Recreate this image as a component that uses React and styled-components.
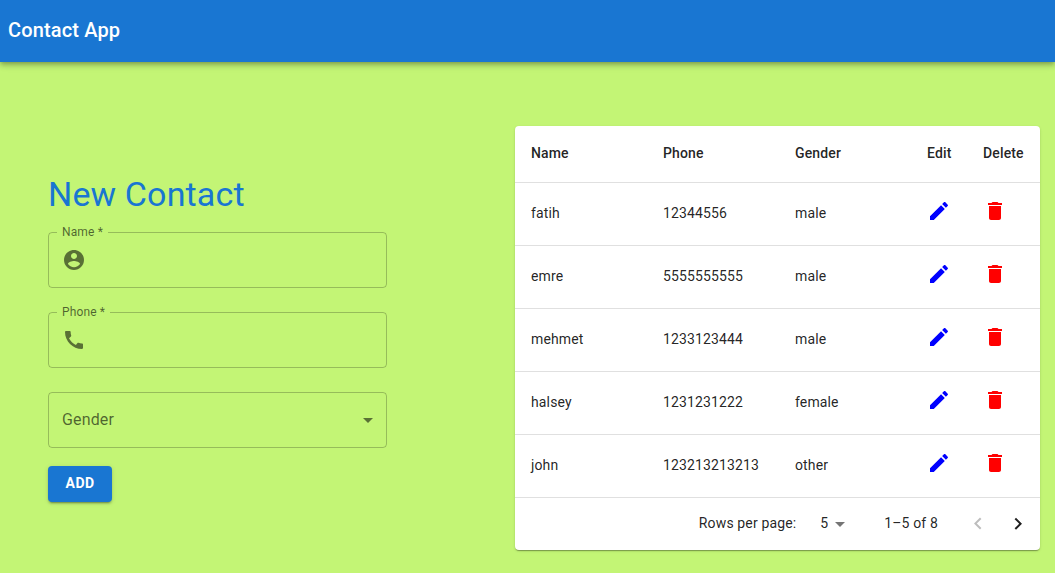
import React, { useState } from "react";
import styled, { createGlobalStyle } from "styled-components";

const GlobalStyle = createGlobalStyle`
  *, *::before, *::after { box-sizing: border-box; }
  body {
    margin: 0;
    background: #c3f575;
    color: rgba(0, 0, 0, 0.87);
    font-family: Roboto, "Liberation Sans", sans-serif;
    font-size: 14px;
    letter-spacing: 0.01em;
  }
  button, input, select { font: inherit; letter-spacing: inherit; color: inherit; }
`;

const paths = {
  account:
    "M12 2C6.48 2 2 6.48 2 12s4.48 10 10 10 10-4.48 10-10S17.52 2 12 2zm0 3c1.66 0 3 1.34 3 3s-1.34 3-3 3-3-1.34-3-3 1.34-3 3-3zm0 14.2c-2.5 0-4.71-1.28-6-3.22.03-1.99 4-3.08 6-3.08 1.99 0 5.97 1.09 6 3.08-1.29 1.94-3.5 3.22-6 3.22z",
  phone:
    "M20.01 15.38c-1.23 0-2.42-.2-3.53-.56-.35-.12-.74-.03-1.01.24l-1.57 1.97c-2.83-1.35-5.48-3.9-6.89-6.83l1.95-1.66c.27-.28.35-.67.24-1.02-.37-1.11-.56-2.3-.56-3.53 0-.54-.45-.99-.99-.99H4.19C3.65 3 3 3.24 3 3.99 3 13.28 10.73 21 20.01 21c.71 0 .99-.63.99-1.18v-3.45c0-.54-.45-.99-.99-.99z",
  dropDown: "M7 10l5 5 5-5z",
  edit:
    "M3 17.25V21h3.75L17.81 9.94l-3.75-3.75L3 17.25zM20.71 7.04c.39-.39.39-1.02 0-1.41l-2.34-2.34c-.39-.39-1.02-.39-1.41 0l-1.83 1.83 3.75 3.75 1.83-1.83z",
  remove:
    "M6 19c0 1.1.9 2 2 2h8c1.1 0 2-.9 2-2V7H6v12zM19 4h-3.5l-1-1h-5l-1 1H5v2h14V4z",
  previous: "M15.41 16.09l-4.58-4.59 4.58-4.59L14 5.5l-6 6 6 6z",
  next: "M8.59 16.34l4.58-4.59-4.58-4.59L10 5.75l6 6-6 6z",
};

const Svg = styled.svg`
  display: block;
  flex: none;
  width: 24px;
  height: 24px;
  fill: currentColor;
`;

const Icon = ({ name }) => (
  <Svg viewBox="0 0 24 24" aria-hidden="true">
    <path d={paths[name]} />
  </Svg>
);

const AppBar = styled.header`
  padding: 15px 8px 17px;
  background: #1976d2;
  color: #fff;
  box-shadow: 0 2px 4px -1px rgba(0, 0, 0, 0.2), 0 4px 5px rgba(0, 0, 0, 0.14),
    0 1px 10px rgba(0, 0, 0, 0.12);
`;

const Brand = styled.h1`
  margin: 0;
  font-size: 20px;
  font-weight: 500;
  line-height: 30px;
`;

const Main = styled.main`
  display: grid;
  grid-template-columns: minmax(0, 113fr) minmax(0, 175fr);
  column-gap: 128px;
  align-items: center;
  padding: 64px 15px 23px 48px;

  @media (max-width: 800px) {
    grid-template-columns: minmax(0, 1fr);
    gap: 48px;
    padding: 32px 16px;
  }
`;

const Form = styled.form`
  display: flex;
  flex-direction: column;
`;

const Title = styled.h2`
  margin: 0 0 18px;
  color: #1976d2;
  font-size: 34px;
  font-weight: 400;
  line-height: 40px;
`;

const Fields = styled.div`
  display: grid;
  gap: 24px;
`;

const Outline = styled.fieldset`
  min-width: 0;
  margin: -5px 0 0;
  padding: 0 13px 5px 8px;
  border: 1px solid rgba(0, 0, 0, 0.23);
  border-radius: 4px;
`;

const Legend = styled.legend`
  padding: 0 5px;
  color: rgba(0, 0, 0, 0.6);
  font-size: 12px;
  line-height: 11px;
`;

const InputRow = styled.div`
  display: flex;
  align-items: center;
  gap: 8px;
  height: 44px;
  padding-left: 5px;
  color: rgba(0, 0, 0, 0.54);
`;

const TextInput = styled.input`
  flex: 1;
  min-width: 0;
  padding: 0;
  border: 0;
  outline: 0;
  background: transparent;
  color: rgba(0, 0, 0, 0.87);
  font-size: 16px;
`;

const SelectBox = styled.div`
  position: relative;
  display: flex;
  color: rgba(0, 0, 0, 0.54);

  ${Svg} {
    position: absolute;
    right: ${(p) => (p.$compact ? 0 : 7)}px;
    top: calc(50% - 12px);
    pointer-events: none;
  }
`;

const GenderSelect = styled.select`
  appearance: none;
  width: 100%;
  height: 56px;
  padding: 0 32px 2px 13px;
  border: 1px solid rgba(0, 0, 0, 0.23);
  border-radius: 4px;
  background: transparent;
  color: rgba(0, 0, 0, 0.6);
  font-size: 16px;
`;

const AddButton = styled.button`
  align-self: flex-start;
  min-width: 64px;
  height: 36px;
  margin-top: 18px;
  padding: 0 16px 2px;
  border: 0;
  border-radius: 4px;
  background: #1976d2;
  color: #fff;
  font-weight: 700;
  letter-spacing: 0.03em;
  text-transform: uppercase;
  cursor: pointer;
  box-shadow: 0 3px 1px -2px rgba(0, 0, 0, 0.2), 0 2px 2px rgba(0, 0, 0, 0.14),
    0 1px 5px rgba(0, 0, 0, 0.12);
`;

const Paper = styled.section`
  overflow-x: auto;
  background: #fff;
  border-radius: 4px;
  box-shadow: 0 2px 1px -1px rgba(0, 0, 0, 0.2), 0 1px 1px rgba(0, 0, 0, 0.14),
    0 1px 3px rgba(0, 0, 0, 0.12);
`;

const Table = styled.table`
  width: 100%;
  table-layout: fixed;
  border-spacing: 0;
`;

const Col = styled.col`
  width: ${(p) => (p.$width ? `${p.$width}px` : "auto")};
`;

const HeadCell = styled.th`
  padding: 15px 16px 17px;
  border-bottom: 1px solid #e0e0e0;
  font-weight: 500;
  line-height: 24px;
  text-align: left;

  &:last-child { padding-right: 0; }
`;

const Cell = styled.td`
  height: 63px;
  padding: ${(p) => (p.$action ? "16px" : "15px 16px 17px")};
  border-bottom: 1px solid #e0e0e0;
  line-height: 20px;
  vertical-align: ${(p) => (p.$action ? "top" : "middle")};
`;

const RowButton = styled.button`
  display: block;
  padding: 0;
  border: 0;
  background: none;
  color: ${(p) => p.$color};
  cursor: pointer;
`;

const Pagination = styled.div`
  display: flex;
  align-items: center;
  justify-content: flex-end;
  height: 52px;
  padding-right: 2px;
  line-height: 20px;
`;

const RowsSelect = styled.select`
  appearance: none;
  width: 48px;
  height: 24px;
  padding: 0 24px 2px 8px;
  border: 0;
  background: transparent;
  color: rgba(0, 0, 0, 0.87);
  text-align-last: right;
`;

const PageRange = styled.span`
  margin: 0 20px 0 32px;
  padding-bottom: 2px;
`;

const RowsLabel = styled.label`
  margin-right: 8px;
  padding-bottom: 2px;
`;

const PageButton = styled.button`
  display: grid;
  place-items: center;
  width: 40px;
  height: 40px;
  padding: 0;
  border: 0;
  border-radius: 50%;
  background: none;
  cursor: pointer;

  &:disabled {
    color: rgba(0, 0, 0, 0.26);
    cursor: default;
  }
`;

const contacts = [
  { name: "fatih", phone: "12344556", gender: "male" },
  { name: "emre", phone: "5555555555", gender: "male" },
  { name: "mehmet", phone: "1233123444", gender: "male" },
  { name: "halsey", phone: "1231231222", gender: "female" },
  { name: "john", phone: "123213213213", gender: "other" },
];

const Field = ({ id, label, icon, type }) => (
  <Outline>
    <Legend>
      <label htmlFor={id}>{label} *</label>
    </Legend>
    <InputRow>
      <Icon name={icon} />
      <TextInput id={id} type={type} required />
    </InputRow>
  </Outline>
);

export default function App() {
  const [gender, setGender] = useState("");

  return (
    <>
      <GlobalStyle />
      <AppBar>
        <Brand>Contact App</Brand>
      </AppBar>
      <Main>
        <Form onSubmit={(e) => e.preventDefault()}>
          <Title>New Contact</Title>
          <Fields>
            <Field id="name" label="Name" icon="account" type="text" />
            <Field id="phone" label="Phone" icon="phone" type="tel" />
            <SelectBox>
              <GenderSelect
                aria-label="Gender"
                value={gender}
                onChange={(e) => setGender(e.target.value)}
              >
                <option value="" hidden>Gender</option>
                <option value="female">female</option>
                <option value="male">male</option>
                <option value="other">other</option>
              </GenderSelect>
              <Icon name="dropDown" />
            </SelectBox>
          </Fields>
          <AddButton type="submit">Add</AddButton>
        </Form>
        <Paper>
          <Table>
            <colgroup>
              <Col />
              <Col />
              <Col />
              <Col $width={56} />
              <Col $width={73} />
            </colgroup>
            <thead>
              <tr>
                {["Name", "Phone", "Gender", "Edit", "Delete"].map((heading) => (
                  <HeadCell key={heading} scope="col">{heading}</HeadCell>
                ))}
              </tr>
            </thead>
            <tbody>
              {contacts.map((c) => (
                <tr key={c.name}>
                  <Cell>{c.name}</Cell>
                  <Cell>{c.phone}</Cell>
                  <Cell>{c.gender}</Cell>
                  <Cell $action>
                    <RowButton type="button" $color="blue" aria-label={`Edit ${c.name}`}>
                      <Icon name="edit" />
                    </RowButton>
                  </Cell>
                  <Cell $action>
                    <RowButton type="button" $color="red" aria-label={`Delete ${c.name}`}>
                      <Icon name="remove" />
                    </RowButton>
                  </Cell>
                </tr>
              ))}
            </tbody>
          </Table>
          <Pagination>
            <RowsLabel htmlFor="rows">Rows per page:</RowsLabel>
            <SelectBox $compact>
              <RowsSelect id="rows" defaultValue="5">
                <option>5</option>
                <option>10</option>
                <option>25</option>
              </RowsSelect>
              <Icon name="dropDown" />
            </SelectBox>
            <PageRange>1–5 of 8</PageRange>
            <PageButton type="button" aria-label="Previous page" disabled>
              <Icon name="previous" />
            </PageButton>
            <PageButton type="button" aria-label="Next page">
              <Icon name="next" />
            </PageButton>
          </Pagination>
        </Paper>
      </Main>
    </>
  );
}
